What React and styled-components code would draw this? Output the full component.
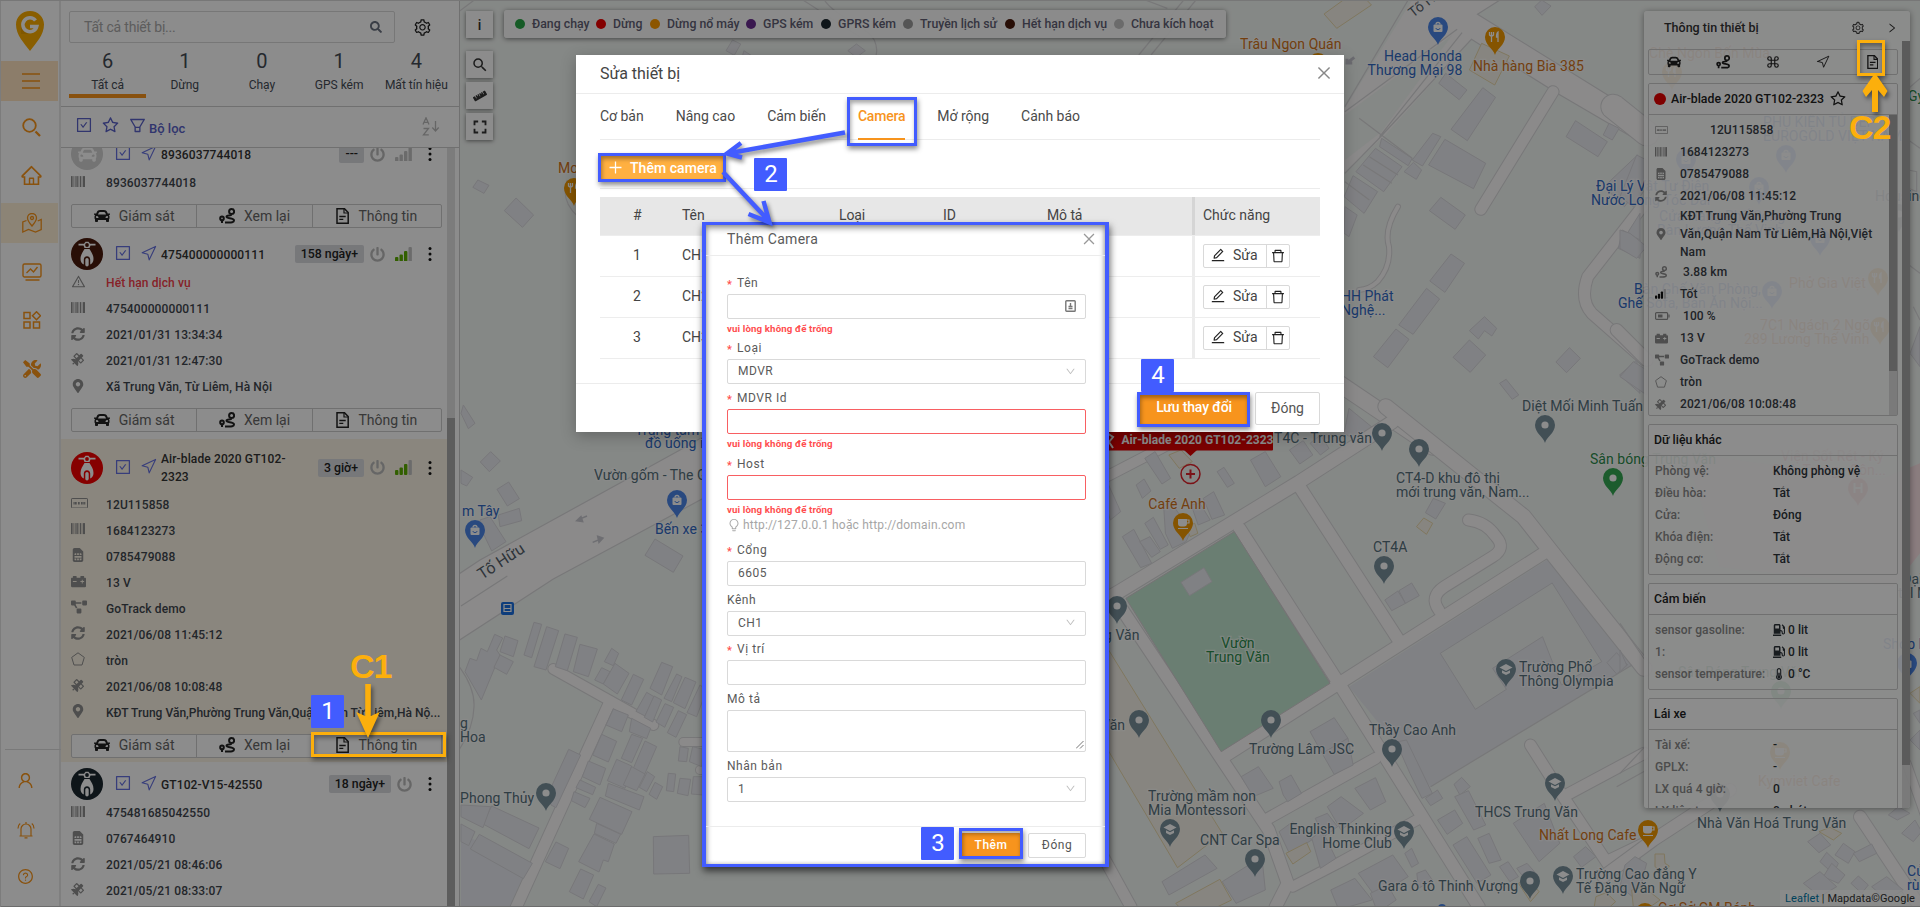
import React from "react";
import styled, { createGlobalStyle, css } from "styled-components";
import {
  AiOutlineHome, AiOutlineUser, AiOutlineQuestionCircle, AiOutlineCheckSquare,
  AiOutlineStar, AiOutlineFilter, AiOutlineSetting, AiOutlineWarning,
  AiOutlineEdit, AiOutlineDelete, AiOutlineClose, AiOutlineDown, AiOutlinePlus,
  AiOutlineRight, AiOutlineBulb,
} from "react-icons/ai";
import {
  FaCar, FaSyncAlt, FaSatellite, FaMapMarkerAlt, FaSimCard, FaCarBattery, FaPowerOff,
  FaGasPump, FaThermometerHalf, FaProjectDiagram, FaSearch, FaTools, FaRuler,
} from "react-icons/fa";
import { FiCommand, FiNavigation } from "react-icons/fi";
import { MdFullscreen, MdSearch } from "react-icons/md";

const ORANGE = "#f7941d";
const BLUE = "#425cff";
const AMBER = "#fcaf0c";

const Global = createGlobalStyle`
  html, body { margin: 0; padding: 0; overflow: hidden; }
  body { font-family: Roboto, "Liberation Sans", sans-serif; font-size: 14px; color: #333; }
  *, *::before, *::after { box-sizing: border-box; }
  svg { display: block; flex: none; }
`;

const Page = styled.div`
  position: relative; display: flex; width: 1920px; height: 907px; overflow: hidden; background: #fff;
`;
const Mask = styled.div`
  position: absolute; inset: 0; background: rgba(0, 0, 0, 0.45);
  box-shadow: inset 0 1px 0 #777, inset 1px 0 0 #7c7c7c, inset 0 -1px 0 #6c6c6c;
`;

/* ---------- icons ---------- */
const Glyph = ({ size = 16, w, children, box = "0 0 24 24", ...p }) => (
  <svg width={w || size} height={size} viewBox={box} fill="none" stroke="currentColor" strokeWidth="2" {...p}>{children}</svg>
);
const MenuIcon = () => <Glyph w={18} size={16} box="0 0 18 16" strokeWidth="1.600"><path d="M0 1h18M0 8h18M0 15h18" /></Glyph>;
const DocIcon = ({ size = 16 }) => (
  <Glyph w={(size * 13) / 16} size={size} box="0 0 13 16" strokeWidth="1.500">
    <path d="M1 .8h7.500l3.700 3.800v10.600H1z" /><path d="M8 1v4h4" strokeWidth="1.200" /><path d="M3.300 8.500h6.400M3.300 11.300h4" strokeWidth="1.300" />
  </Glyph>
);
const RouteIcon = ({ size = 16 }) => (
  <Glyph size={size} box="0 0 16 16" strokeWidth="2">
    <circle cx="12.6" cy="3.6" r="2.5" />
    <circle cx="3" cy="10.4" r="1.8" />
    <path d="M3 12v3" />
    <path d="M12.5 6.5C12 8.4 7.500 6.500 7.500 8.800c0 2.200 7.500.6 7.500 3.700 0 2.500-3.500 2-9 2" />
  </Glyph>
);
const BarcodeIcon = ({ size = 14 }) => (
  <svg width={size} height={size * 0.8} viewBox="0 0 14 11" fill="currentColor">
    {[[0, 1.6], [2.5, .8], [4, .6], [5.4, 1.4], [7.600, .6], [9, 1], [10.700, .6], [12, 2]].map(([x, w]) => <rect key={x} x={x} width={w} height="11" />)}
  </svg>
);
const PlateIcon = ({ size = 17 }) => (
  <svg width={size} height={size * 0.62} viewBox="0 0 17 10.500" fill="none" stroke="currentColor">
    <rect x=".5" y=".5" width="16" height="9.500" rx=".6" />
    <path d="M2.500 5.300h3.500M7 5.300h2M10 5.300h4.500" strokeWidth="2.400" strokeDasharray="1.100 .3" />
  </svg>
);
const PentagonIcon = ({ size = 14 }) => (
  <Glyph size={size} box="0 0 14 14" strokeWidth="1"><path d="M7 .8 13.300 5.400 11 13H3L.7 5.400Z" /></Glyph>
);
const BatteryIcon = () => (
  <Glyph w={15} size={8} box="0 0 15 8" strokeWidth="1.200"><rect x=".6" y=".6" width="12" height="6.800" rx="1" /><path d="M3 4h4.500" strokeWidth="3" /><path d="M14 2.500v3" /></Glyph>
);
const SignalIcon = ({ size = 17, on = "#5cae00", off = "#c4c4c4", lit = 3 }) => (
  <svg width={size} height={size * 0.88} viewBox="0 0 17 15">
    {[[0, 10, 5], [4.500, 7.500, 7.500], [9, 4, 11], [13.500, 0, 15]].map(([x, y, h], i) => (
      <rect key={x} x={x} y={y} width="3.400" height={h} rx="1" fill={i < lit ? on : off} />
    ))}
  </svg>
);
const ScooterIcon = () => (
  <svg width="22" height="28" viewBox="0 0 22 28" fill="#fff">
    <path d="M2.500 3.800h5.500l1.500-2h3l1.500 2h5.500v1.700h-5L13.500 8h-5L7.500 5.500h-5z" />
    <circle cx="11" cy="5" r="1.900" fill="currentColor" />
    <path d="M8.500 9h5c2 3.500 4 6 4 10 0 3-1.400 4.800-3.300 5.600v-5.100c0-4.500-6.400-4.500-6.400 0v5.100C5.900 23.800 4.500 22 4.500 19c0-4 2-6.500 4-10z" />
    <rect x="9.300" y="18" width="3.400" height="8.500" rx="1.700" />
  </svg>
);
const DotsIcon = () => (
  <svg width="4" height="14" viewBox="0 0 4 14" fill="#111"><circle cx="2" cy="1.600" r="1.500" /><circle cx="2" cy="7" r="1.500" /><circle cx="2" cy="12.400" r="1.500" /></svg>
);
const MapMarkIcon = () => (
  <Glyph size={20} box="0 0 20 20" strokeWidth="1.300">
    <path d="M10 13C7 9.500 5.500 7.500 5.500 5a4.500 4.500 0 0 1 9 0c0 2.500-1.500 4.500-4.500 8z" /><circle cx="10" cy="5" r="1.500" />
    <path d="M4.500 7.500.8 9v10l5.700-2.500L13.500 19l5.700-2.500v-10l-3.500 1.500" />
  </Glyph>
);
const ChartIcon = () => (
  <Glyph size={20} box="0 0 20 20" strokeWidth="1.400"><rect x="1" y="2" width="18" height="13" rx="1.500" /><path d="m4.500 11 4-4 3 3 4-5M3.500 18h14" /></Glyph>
);
const AppsIcon = () => (
  <Glyph size={18} box="0 0 18 18" strokeWidth="1.500"><rect x="1" y="1.500" width="6" height="6" /><path d="m13.500.8 4 4-4 4-4-4z" /><rect x="1" y="11" width="6" height="6" /><rect x="10.500" y="11" width="6" height="6" /></Glyph>
);
const BellIcon = () => (
  <Glyph size={18} box="0 0 18 18" strokeWidth="1.200"><path d="M2.500 15h13M4 15V8a5 5 0 0 1 10 0v7M9 1v2M7.500 16.800h3M1 7.500C1 5 1.800 3.500 3.200 2.500M17 7.500c0-2.500-.8-4-2.200-5" /></Glyph>
);
const BigSearch = () => (
  <Glyph size={19} box="0 0 19 19" strokeWidth="1.800"><circle cx="7.500" cy="7.500" r="6.300" /><path d="m13.500 13.500 4.500 4.500" strokeWidth="2.300" /></Glyph>
);
const SortIcon = () => (
  <Glyph w={18} size={19} box="0 0 18 19" strokeWidth="1.300">
    <path d="M1 7.500 4 .8l3 6.700M2 5.300h4M1.500 11.500H6.500L1.500 17.800h5.300M13.500 4v9.500M10.300 10.500l3.200 3.500 3.200-3.500" />
  </Glyph>
);
const LogoMark = () => (
  <svg width="28" height="40" viewBox="0 0 28 40">
    <path d="M14 0C6 0 0 6 0 13.500 0 24 8 32 14 40c6-8 14-16 14-26.500C28 6 22 0 14 0z" fill="#f9ac00" />
    <path d="M5 15v8h9v-2z" fill="#d99000" opacity=".5" />
    <path d="M19.500 9.500a7 7 0 1 0 1.200 6H14" fill="none" stroke="#fff" strokeWidth="3.600" />
  </svg>
);

/* ---------- left rail ---------- */
const Rail = styled.nav`
  width: 61px; flex: none; display: flex; flex-direction: column; align-items: center;
  border-right: 2px solid #e8e8e8; color: #f9951a; background: #fff; padding-top: 11px;
`;
const LogoSlot = styled.div`height: 50px;`;
const RailItem = styled.div`
  width: 57px; height: ${(p) => p.$h || 40}px; margin-bottom: ${(p) => p.$gap ?? 8}px;
  display: flex; align-items: center; justify-content: center; padding-left: ${(p) => p.$nudge ?? 4}px;
  background: ${(p) => p.$bg || "transparent"};
`;
const RailFoot = styled.div`
  margin-top: auto; width: 100%; margin-left: 9px; height: 158px; border-top: 1px solid #dcdcdc; padding-top: 6px;
  ${RailItem} { margin-left: -9px; }
`;

/* ---------- device panel ---------- */
const Panel = styled.section`
  width: 399px; flex: none; display: flex; flex-direction: column; background: #fff;
  border-right: 1px solid #ccc;
`;
const SearchRow = styled.div`display: flex; align-items: center; padding: 11px 0 0 8px; height: 43px;`;
const SearchBox = styled.div`
  width: 326px; height: 32px; border: 1px solid #d9d9d9; border-radius: 2px; display: flex; align-items: center;
  justify-content: space-between; padding: 0 12px 0 14px; color: #a9a9a9; letter-spacing: -0.2px; font-size: 14px;
  svg { color: #6b7280; }
`;
const GearSlot = styled.div`margin-left: 18px; color: #222;`;
const Stats = styled.div`display: flex; margin-left: 8px; height: 63px;`;
const Stat = styled.div`
  width: 77.2px; height: 55px; display: flex; flex-direction: column; align-items: center; color: #444b55;
  border-bottom: 4px solid ${(p) => (p.$on ? ORANGE : "transparent")};
  b { font-weight: 400; font-size: 20px; line-height: 24px; margin-top: 6px; }
  span { font-size: 12px; line-height: 18px; margin-top: 3px; white-space: nowrap; }
`;
const FilterBar = styled.div`
  height: 42px; border: solid #ccc; border-width: 1px 0; display: flex; align-items: center; padding: 0 19px 4px 14px;
  color: #5961c8; font-weight: 500; font-size: 13px; gap: 8px; flex: none;
  > span { margin: 6px 0 0 -6px; }
  > i { margin-left: auto; color: #bbb; padding-top: 2px; }
`;
const ListWrap = styled.div`flex: 1; display: flex; overflow: hidden;`;
const List = styled.div`width: 386px; height: 775px; margin-top: -16px; flex: none;`;
const Track = styled.div`width: 8px; background: #e2e2e2; padding-top: 270px;`;
const Thumb = styled.div`height: 100%; background: #a9a9a9;`;
const Item = styled.article`
  padding: ${(p) => (p.$on ? "10.5px 0 4.5px 10px" : "6px 0 4px 10px")};
  margin-top: ${(p) => (p.$on ? 3 : 0)}px; background: ${(p) => (p.$on ? "#fcf5e6" : "transparent")};
`;
const Head = styled.div`
  display: flex; align-items: center; height: ${(p) => (p.$on ? 36 : 32)}px; margin-bottom: ${(p) => (p.$on ? 6 : 0)}px; padding-right: 15px;
`;
const Avatar = styled.div`
  width: 32px; height: 32px; border-radius: 50%; background: ${(p) => p.$c}; color: ${(p) => p.$c};
  display: flex; align-items: center; justify-content: center; flex: none;
  > svg.car { color: #fff; }
`;
const HeadTools = styled.div`display: flex; align-items: center; gap: 7.500px; margin: -2px 5px 0 11px; color: #6570e0;`;
const Name = styled.div`flex: 1; font-weight: 500; font-size: 12px; line-height: 18px; letter-spacing: .12px; color: #333; padding-top: 1px; max-width: 140px; white-space: ${(p) => (p.$wrap ? "normal" : "nowrap")}; margin-left: -.5px;`;
const Ago = styled.div`
  margin-left: auto; background: #d9dade; border-radius: 2px; font-weight: 500; height: 18px; line-height: 18px; padding: 0 6px;
  font-size: 12.300px; color: #222; white-space: nowrap;
`;
const HeadEnd = styled.div`display: flex; align-items: center; color: #bbb; margin-left: 6px; > :nth-child(2) { margin-left: 10px; } > :last-child { margin-left: 16px; }`;
const Line = styled.div`
  height: 26px; display: flex; align-items: center; font-weight: 500; font-size: 12px; letter-spacing: ${(p) => (p.$tight ? 0.01 : 0.12)}px; color: ${(p) => p.$c || "#3f464e"};
  white-space: nowrap;
  > i { width: 35px; color: #8f8f8f; margin-top: -3px; }
`;
const Actions = styled.div`
  display: flex; width: 371px; height: 24px; margin-top: 8px; border: 1px solid #ccc; border-radius: 2px; background: #fff;
`;
const Action = styled.div`
  width: ${(p) => p.$w}px; display: flex; align-items: center; justify-content: center; gap: 9px; font-size: 14px; color: #666; padding-bottom: 1px;
  & + & { border-left: 1px solid #ccc; }
  svg { color: #222; }
`;

const LINE_ICONS = {
  bar: <BarcodeIcon />, plate: <PlateIcon />, sim: <FaSimCard size={14} />, bat: <FaCarBattery size={15} />,
  org: <FaProjectDiagram size={16} />, sync: <FaSyncAlt size={14} />, geo: <PentagonIcon />, sat: <FaSatellite size={13} />,
  pin: <FaMapMarkerAlt size={14} />, warn: <AiOutlineWarning size={15} />, route: <RouteIcon size={12} />,
  batt: <BatteryIcon />, sig: <SignalIcon size={11} on="#111" lit={3} />,
};
const DEVICES = [
  { name: "8936037744018", c: "#d3d3d3", car: true, ago: "---", lit: 0, rows: [["bar", "8936037744018"]] },
  { name: "475400000000111", c: "#4a1a0c", ago: "158 ngày+", lit: 3, rows: [["warn", "Hết hạn dịch vụ", "#f5404a"], ["bar", "475400000000111"], ["sync", "2021/01/31 13:34:34"], ["sat", "2021/01/31 12:47:30"], ["pin", "Xã Trung Văn, Từ Liêm, Hà Nội"]] },
  { name: "Air-blade 2020 GT102-2323", on: true, c: "#f50000", ago: "3 giờ+", lit: 3, rows: [["plate", "12U115858"], ["bar", "1684123273"], ["sim", "0785479088"], ["bat", "13 V"], ["org", "GoTrack demo"], ["sync", "2021/06/08 11:45:12"], ["geo", "tròn"], ["sat", "2021/06/08 10:08:48"], ["pin", "KĐT Trung Văn,Phường Trung Văn,Quận Nam Từ Liêm,Hà Nộ..."]] },
  { name: "GT102-V15-42550", c: "#1b272e", ago: "18 ngày+", noSignal: true, noActions: true, rows: [["bar", "475481685042550"], ["sim", "0767464910"], ["sync", "2021/05/21 08:46:06"], ["sat", "2021/05/21 08:33:07"]] },
];
const Device = ({ d }) => (
  <Item $on={d.on}>
    <Head $on={d.on}>
      <Avatar $c={d.c}>{d.car ? <FaCar className="car" size={19} /> : <ScooterIcon />}</Avatar>
      <HeadTools><AiOutlineCheckSquare size={18} /><FiNavigation size={17} strokeWidth={1.6} /></HeadTools>
      <Name $wrap={d.on}>{d.name}</Name>
      <Ago>{d.ago}</Ago>
      <HeadEnd><FaPowerOff size={15} />{!d.noSignal && <SignalIcon lit={d.lit} />}<DotsIcon /></HeadEnd>
    </Head>
    {d.rows.map(([k, t, c]) => <Line key={t} $c={c} $tight={t.length > 40}><i>{LINE_ICONS[k]}</i>{t}</Line>)}
    {!d.noActions && (
      <Actions>
        <Action $w={125}><FaCar size={16} />Giám sát</Action>
        <Action $w={116}><RouteIcon size={16} />Xem lại</Action>
        <Action $w={130}><DocIcon size={16} />Thông tin</Action>
      </Actions>
    )}
  </Item>
);

/* ---------- map ---------- */
const MapArea = styled.main`position: relative; flex: 1; overflow: hidden; background: #f3f7f4;`;
const Canvas = styled.svg`
  position: absolute; left: 0; top: 0;
  path, polygon, polyline, rect.b { vector-effect: non-scaling-stroke; }
  .bl { fill: #eaebf0; stroke: #d9d9de; stroke-width: 1; }
  .ye { fill: #f6f3ea; stroke: #e9d9ac; stroke-width: 1; }
  .ln { fill: none; stroke: #dadadc; stroke-width: 1.2; }
  .rd { fill: #fdfbfb; stroke: #dadadc; stroke-width: 1.2; }
  text { font-family: Roboto, sans-serif; font-size: 14px; letter-spacing: .05px; paint-order: stroke; stroke: #fff; stroke-opacity: .55; stroke-width: 2.5px; }
`;
const Roads = ({ list }) => (
  <g fill="none" strokeLinejoin="round" strokeLinecap="round">
    {list.map(([d, w]) => <path key={d} d={d} stroke="#dadadc" strokeWidth={w + 2} />)}
    {list.map(([d, w]) => <path key={d} d={d} stroke="#fdfbfb" strokeWidth={w} />)}
  </g>
);
const Blocks = ({ list, cls = "bl" }) => list.map((p) => <polygon key={p} points={p} className={cls} />);

const PIN_COLORS = { slate: "#78909c", blue: "#4b86e8", orange: "#f29900", green: "#34a853", pink: "#e57373" };
const Pin = ({ x, y, c = "slate", k = "dot" }) => (
  <g transform={`translate(${x} ${y})`}>
    <path d="M0 18C-1.500 12-10 8-10 0a10 10 0 0 1 20 0C10 8 1.500 12 0 18z" fill={PIN_COLORS[c]} />
    {k === "dot" && <circle r="3.600" fill="#fff" />}
    {k === "bag" && <g fill="#fff"><rect x="-4.500" y="-2.500" width="9" height="7.500" rx="1" /><path d="M-2-2.500a2 2 0 0 1 4 0" fill="none" stroke="#fff" strokeWidth="1.300" /><path d="M-2.200 1a2.300 2.300 0 0 0 4.400 0" fill="none" stroke={PIN_COLORS[c]} /></g>}
    {k === "cup" && <g fill="#fff"><path d="M-5-4H4v4.500a3 3 0 0 1-3 3h-3a3 3 0 0 1-3-3z" /><path d="M4-3h2v3H4M-5 5.500H5" fill="none" stroke="#fff" strokeWidth="1.200" /></g>}
    {k === "cap" && <g fill="#fff"><path d="M0-5 6.500-1.500 0 2-6.500-1.500z" /><path d="M-4 1.200 0 3.300 4 1.200V4L0 6-4 4z" /></g>}
    {k === "fork" && <path d="M-3.500-5v4m0 0v6M-5.500-5v3q2 2 4 0v-3M3 5v-10q-1.500 1-1.500 5H3" fill="none" stroke="#fff" strokeWidth="1.300" />}
    {k === "H" && <path d="M-3.500-5V5M3.500-5V5M-3.500 0h7" stroke="#fff" strokeWidth="2" />}
  </g>
);
const PINS = [
  [1438, 27, "blue", "bag"], [1495, 37, "orange", "fork"], [1545, 425], [1382, 433], [1419, 449], [1613, 478, "green"], [1183, 523, "orange", "cup"],
  [1384, 566], [1117, 606], [1506, 669, "slate", "cap"], [1139, 720], [1271, 720], [1392, 749], [1555, 783, "slate", "cap"], [1170, 829, "slate", "cap"],
  [1404, 831, "slate", "cap"], [1255, 859], [1530, 881], [1563, 876, "slate", "cap"], [677, 500, "blue", "bag"], [475, 530, "blue", "bag"], [546, 793],
  [1648, 830, "orange", "cup"], [574, 188, "orange", "fork"], [1672, 72, "orange", "fork"], [1786, 155, "blue", "bag"], [1686, 159, "blue", "bag"],
  [1759, 187, "blue", "bag"], [1820, 238, "blue", "bag"], [1772, 291, "blue", "bag"], [1878, 278, "orange", "fork"], [1880, 327, "orange", "fork"],
  [1899, 214], [1858, 488, "pink", "H"], [1907, 663, "blue", "bag"], [1781, 691, "green"], [1780, 752, "orange", "cup"], [1720, 794], [1645, 913, "orange", "cup"],
  [1318, 63, "orange", "fork"],
];
const T = { s: "#56707c", b: "#3069c4", o: "#d2741a", g: "#2b8c4c", p: "#e57373" };
const LABELS = [
  [1240, 49, "Trâu Ngon Quán", "o"], [1423, 61, "Head Honda", "b", "middle"], [1415, 75, "Thương Mại 98", "b", "middle"], [1473, 71, "Nhà hàng Bia 385", "o"],
  [1596, 191, "Đại Lý Vật Tư Điện", "b"], [1591, 205, "Nước Long Tóc Dài", "b"], [1634, 294, "Bàn Ghế Văn Phòng,", "b"], [1618, 308, "Ghế Sofa, Bàn Ăn Nội...", "b"],
  [1341, 301, "HH Phát", "b"], [1341, 315, "Nghệ...", "b"], [1522, 411, "Diệt Mối Minh Tuấn", "s"], [1274, 443, "T4C - Trung văn", "s"],
  [1396, 483, "CT4-D khu đô thị", "s"], [1396, 497, "mới trung văn, Nam...", "s"], [1590, 464, "Sân bóng Trung Văn", "g"], [1177, 509, "Café Anh", "o", "middle"],
  [1373, 552, "CT4A", "s"], [1104, 640, "g Văn", "s"], [1238, 648, "Vườn", "g", "middle"], [1238, 662, "Trung Văn", "g", "middle"], [1519, 672, "Trường Phổ", "s"],
  [1519, 686, "Thông Olympia", "s"], [1101, 730, "Văn", "s"], [1369, 735, "Thầy Cao Anh", "s"], [1249, 754, "Trường Lâm JSC", "s"], [1148, 801, "Trường mầm non", "s"],
  [1148, 815, "Mia Montessori", "s"], [1200, 845, "CNT Car Spa", "s"], [1392, 834, "English Thinking", "s", "end"], [1392, 848, "Home Club", "s", "end"], [1475, 817, "THCS Trung Văn", "s"],
  [1539, 840, "Nhất Long Cafe", "o"], [1378, 891, "Gara ô tô Thinh Vượng", "s"], [1576, 879, "Trường Cao đẳng Y", "s"], [1576, 893, "Tế Đặng Văn Ngữ", "s"],
  [1697, 828, "Nhà Văn Hoá Trung Văn", "s"], [645, 448, "đồ uống ít", "b"], [635, 435, "Trung tâm phân", "b"], [594, 480, "Vườn gốm - The Garden", "s"],
  [655, 534, "Bến xe 379", "b"], [462, 516, "m Tây", "b"], [460, 728, "g", "s"], [460, 742, "Hoa", "s"], [460, 803, "Phong Thủy", "s"], [558, 173, "Mon", "o"],
  [1649, 58, "Chè Ngon Bốn Mùa", "o"], [1763, 127, "PHỤ KIỆN TỦ BẾP", "b"], [1763, 141, "EUROGOLD VIỆT NAM", "b"], [1659, 221, "Cửa Hàng Phố Sóng", "b"], [1657, 235, "Bàn Lương Thế Vinh", "b"],
  [1789, 288, "Phở Gia Việt", "o"], [1760, 330, "7C1 Ngách 2 Ngõ", "o"], [1744, 344, "289 Lương Thế Vinh", "o"], [1875, 201, "Housing", "s"], [1908, 101, "Gym", "g"],
  [1781, 461, "Viện Sốt Rét - Ký", "p"], [1772, 475, "Sinh Trùng - Côn...", "p"], [1902, 584, "Đại", "s"], [1898, 598, "tel M", "s"], [1883, 649, "Shop M", "b"], [1678, 677, "Sân Bóng Trung Văn", "g"],
  [1758, 786, "Kymviet Cafe", "o"], [1907, 876, "Cửa", "b"], [1907, 890, "rùa", "b"], [1658, 913, "Cơ Sở GM Bánh", "o"],
];
const Z5 = "translate(1000 0) scale(.40816 .33333)";
const Z10 = "translate(1100 420) scale(.34439 .33333)";
const Z11 = "translate(450 400) scale(.33333)";

const MapCanvas = () => (
  <Canvas width="1460" height="907" viewBox="460 0 1460 907">
    <g transform="translate(460 0) scale(.35714 .33333)">
      <path d="M-10 40 40 0M960 0c60 40 110 80 160 110M1020 0c30 50 110 70 140 120 12 30 6 40-2 80M300 540q-20 60 30 110" className="ln" />
      <Blocks list={["763,120 786,132 768,166 745,152", "1110,132 1135,152 1110,172 1086,152", "795,152 815,166 790,172", "50,540 81,556 67,580 36,562", "157,594 206,645 175,682 124,632"]} />
    </g>
    <g transform={Z5}>
      <path d="M340 165 450 0M370 165 480 0M356 0 410 25" className="ln" />
      <polygon points="1010,0 1225,0 1170,43 1568,345 1568,425 1365,280 1155,118 940,410 840,520 840,335" className="rd" strokeOpacity="0" />
      <path d="M1225 0 1170 43 1568 345M1568 425 1365 280 1155 118 925 420 845 520M1000 0 845 320M1120 88 845 335M1132 98 930 410" className="ln" />
      <polygon points="845,345 1108,105 935,395 845,480" fill="#f3f7f4" />
      <Roads list={[["M1355 275 1178 628", 11], ["M1580 610 1440 830 Q1420 900 1450 940L1580 1080", 11], ["M975 620Q940 690 953 740 958 800 925 845 905 868 880 870", 4], ["M830 1150 1060 1340", 16]]} />
      <Blocks list={["1092,220 1144,270 1125,299 1075,250", "1183,263 1214,292 1145,422 1105,388", "1060,400 1080,410 1035,498 1010,480", "1090,418 1190,490 1160,566 1050,495", "1410,362 1488,425 1465,470 1387,410", "1492,370 1517,385 1500,420 1478,405", "935,415 1010,475 1000,497 930,440", "920,445 985,500 940,575 872,515", "865,527 925,575 892,640 843,590", "845,620 875,645 855,710 843,700", "1013,487 1033,510 1020,538 990,515", "1080,592 1140,645 1115,688 1052,632", "1105,762 1138,790 1090,877 1053,843", "1045,865 1077,897 1012,1003 977,975", "970,987 1002,1018 950,1103 915,1070", "1187,950 1217,985 1205,1008 1187,992 1172,1017 1150,992", "1150,1020 1190,1065 1152,1117 1110,1072", "1395,1043 1422,1075 1388,1118 1362,1086", "1240,1138 1271,1185 1255,1198 1224,1150", "1562,465 1568,560 1530,620 1480,560", "1568,640 1568,770 1516,740", "1560,1080 1568,1180 1518,1125", "1327,0 1350,18 1328,46 1310,20", "1525,690 1568,720 1568,775 1515,745", "855,1225 920,1290 900,1340 843,1300"]} />
      <path d="M890 495 960 550M905 470 975 525M880 355 1010 475M845 545 905 600" className="ln" />
      <Blocks cls="ye" list={["875,-30 910,15 825,85 794,42", "1180,130 1248,168 1212,255 1150,210"]} />
      <path d="m868 172-18 17m0-13v13h13" className="ln" strokeWidth="2" style={{ stroke: "#c4c4cc", strokeWidth: 3 }} />
    </g>
    <g transform={Z11}>
      <polygon points="10,533 90,480 690,150 900,30 900,220 760,295 310,537 10,732" className="rd" />
      <path d="M33 618 172 528M20 790Q75 860 72 920 70 990 20 1060" className="ln" />
      <polygon points="33,1300 240,1400 190,1530 33,1530" fill="#e9ecf2" />
      <Roads list={[["M310 807 610 975", 10], ["M480 905 395 1090 195 1530", 11], ["M700 1026H790M750 1110H790", 8]]} />
      <Blocks list={["40,15 75,70 55,86 33,40", "122,155 151,183 118,215 91,186", "33,210 68,232 50,258 33,250", "176,246 208,296 172,318 141,268", "145,345 208,325 215,362 150,380", "90,360 120,350 168,425 125,453 95,390", "615,417 699,468 670,517 585,466", "252,667 275,673 245,773 222,765", "290,680 326,692 288,810 252,800", "345,702 382,712 352,812 316,800", "390,733 442,747 415,830 370,815", "134,703 158,714 140,750 150,765 94,900 45,815 60,775 80,782 93,745 112,755", "165,708 204,722 190,770 150,755", "150,765 190,785 170,823 132,802", "485,745 506,760 490,797 463,785", "455,803 480,815 460,852 434,840", "495,790 537,820 502,882 460,852", "550,823 581,838 545,915 514,900", "635,787 668,800 635,885 600,865", "680,822 696,830 665,905 642,895", "705,832 738,846 705,926 670,908", "750,855 770,870 740,950 711,938", "590,877 612,890 585,948 558,934", "612,888 635,900 608,966 583,952", "645,911 671,922 644,982 618,966", "685,932 710,944 678,1012 652,998", "490,927 535,945 515,995 468,975", "545,955 602,985 590,1016 538,995", "455,1003 500,1024 475,1086 428,1065", "545,1003 578,1015 545,1088 514,1075", "585,1023 620,1040 583,1125 550,1105", "500,1078 545,1098 525,1165 472,1142", "545,1100 585,1122 560,1172 520,1155", "592,1115 614,1130 590,1175 568,1162", "475,1150 582,1190 568,1230 466,1188", "615,1147 638,1160 620,1198 597,1183", "655,1120 677,1122 671,1175 649,1172", "690,1135 722,1138 714,1187 682,1180", "730,1130 760,1130 760,1185 724,1182", "690,1040 715,1045 710,1085 685,1083", "728,1040 760,1048 755,1100 718,1085", "415,1083 467,1105 450,1155 397,1130", "390,1140 437,1162 428,1184 378,1163", "372,1175 420,1195 405,1223 364,1202", "450,1192 546,1235 515,1303 418,1258", "440,1270 512,1303 498,1330 433,1300", "432,1302 493,1332 475,1385 460,1380 447,1416 386,1385", "392,1407 431,1425 400,1497 358,1475", "445,1453 468,1464 440,1520 417,1505", "610,1310 716,1306 719,1420 611,1422", "318,1326 356,1345 330,1406 286,1385", "356,1048 392,1065 318,1223 303,1215 295,1180", "125,1218 267,1284 237,1346 99,1272", "33,1215 122,1220 99,1283 33,1250", "88,1303 247,1390 220,1436 61,1347", "33,1272 75,1295 56,1337 33,1325"]} />
      <g stroke="#c9c9d0" strokeWidth="1.500" fill="#c9c9d0"><path d="m411 348-24 10m6-8-13 12 18 3z" /><path d="m428 427 24-10m-9-8 16 5-12 13z" /></g>
    </g>
    <g transform={Z10}>
      <polygon points="25,690 355,1240 225,1343 -200,600 -100,500" className="ye" />
      <polygon points="723,800 1312,410 1545,735 960,1100" fill="#e9ebf1" />
      <Roads list={[["M-250 700 60 512 578 186 850 5", 13], ["M573 190 865 657", 12], ["M405 325 700 800 1100 1461", 12], ["M65 570 355 1020 490 1230 545 1390 510 1461", 12], ["M360 1010 1300 392", 12], ["M830-40 1230 290 1310 395 1580 745", 15], ["M475 1203 800 1015", 11], ["M560 1400 700 1325 920 1200", 10], ["M985 572Q955 530 1000 500L1140 410Q1180 385 1150 350 1120 305 1070 300", 11], ["M1250 975 1345 1130 1480 1340M1345 1130 1580 1000M1480 1320 1580 1270", 11], ["M-60 1180 90 1461", 11], ["M0 180 560 -120", 10]]} />
      <polygon points="75,535 390,335 668,790 352,995" fill="#c2e6cf" stroke="#d5cfd3" />
      <polygon points="988,700 1313,489 1457,725 1340,795 1285,650 1140,745 1180,808 1090,868" fill="#f1f5f2" stroke="#d9d9de" />
      <path d="M960 1100 1545 735" className="ln" strokeWidth=".6" />
      <Blocks list={["235,487 302,443 325,485 260,527", "130,115 160,95 205,175 180,192", "105,195 128,177 148,213 123,235", "340,155 360,142 390,190 370,202", "437,120 480,95 525,170 480,200", "65,350 98,328 150,430 118,443", "115,365 145,350 175,395 150,412", "130,310 155,292 198,375 175,388", "185,260 205,245 235,290 265,330 250,365 210,385 190,340", "265,255 290,250 320,300 285,315", "300,235 330,215 362,285 325,298", "0,200 25,195 60,275 30,300", "550,90 590,62 618,105 580,132", "610,70 640,45 665,85 640,105", "968,235 1003,250 975,297 945,278", "827,540 865,513 887,550 847,572", "868,512 905,489 927,527 887,550", "1500,698 1532,735 1500,762 1472,728", "610,935 680,893 720,955 645,1000", "645,1000 720,955 735,1035 680,1063", "410,1070 460,1040 503,1105 445,1130", "520,1085 555,1065 585,1120 545,1145 532,1125", "180,1385 305,1305 340,1345 200,1425", "355,1385 470,1310 480,1410 395,1450", "520,1235 560,1205 615,1260 550,1300", "615,1255 645,1230 685,1315 640,1345", "625,1195 660,1180 690,1220 650,1250", "660,1160 700,1130 765,1180 700,1230", "740,1105 800,1073 830,1145 785,1170", "865,965 890,960 965,1120 935,1135 900,1060 870,990", "945,1135 980,1110 995,1135 960,1157", "1028,1093 1050,1072 1075,1100 1045,1125", "1030,1130 1070,1112 1120,1215 1085,1230", "980,1200 1030,1170 1053,1210 1008,1243", "1025,1275 1065,1250 1135,1365 1095,1390", "1097,1255 1130,1240 1165,1320 1130,1330", "1200,1210 1290,1150 1335,1270 1275,1325", "1375,1310 1410,1280 1440,1310 1398,1342", "1160,1340 1185,1325 1215,1370 1190,1385", "885,1300 905,1285 925,1330 905,1342", "750,1360 850,1305 895,1370 800,1430", "670,1410 740,1375 790,1440 720,1461 690,1461", "920,1360 945,1350 965,1380 925,1405", "785,1420 835,1395 860,1440 830,1461 800,1461", "1210,1345 1240,1330 1270,1365 1250,1400", "1520,1340 1568,1310 1568,1360 1540,1380"]} />
      <Blocks cls="ye" list={["200,105 235,90 268,125 230,145", "940,294 966,310 948,343 919,320", "540,1300 600,1268 612,1295 560,1332", "220,1450 348,1378 382,1440 340,1461 230,1461", "1215,1390 1240,1375 1275,1415 1250,1445", "1440,1430 1470,1418 1497,1445 1480,1461 1435,1461", "250,320 275,310 284,340 262,350"]} />
    </g>
    <g transform="translate(1620 420) scale(.33333)">
      <path d="M0 610 75 720M0 1060 75 980M-10 1100 80 1050" className="ln" />
      <polygon points="200,100 780,180 900,130 900,400 820,500 300,440" fill="#fbe3e6" />
      <Roads list={[["M-50 1370 100 1260 330 1110", 12], ["M720 1190 900 1461", 12], ["M860 1030 920 1200", 8]]} />
      <Blocks list={["0,690 20,735 0,755", "880,880 900,870 900,910", "870,960 900,930 900,990", "805,1185 835,1160 870,1180 832,1200", "845,1240 885,1200 905,1235 880,1265", "600,1240 632,1275 597,1298 563,1265", "620,1297 655,1330 640,1362 600,1325", "670,1270 705,1295 685,1330 645,1305", "700,1300 755,1272 770,1300 718,1325", "635,1330 675,1365 655,1390 610,1370", "715,1368 745,1395 725,1420 693,1390", "550,1390 600,1355 650,1400 600,1430", "755,1400 800,1370 850,1410 800,1440", "15,1335 45,1310 80,1330 50,1440 0,1400"]} />
      <Blocks cls="ye" list={["105,1302 133,1302 135,1330 148,1338 130,1360 105,1340", "597,1235 630,1222 665,1240 640,1260", "35,1410 70,1400 120,1440 90,1461 40,1461", "870,820 900,800 900,850"]} />
    </g>
    <g transform="translate(1620 0) scale(.33333)">
      <path d="M860 270 900 235M865 420l35 25M865 510l25 5v60l-25-10M860 790l40 30M880 920 900 960" className="ln" />
      <Roads list={[["M-20 320 80 400", 24], ["M-10 990 80 1080", 12]]} />
      <Blocks list={["50,465 80,480 80,560 40,620 0,590", "0,690 30,700 80,740 50,775 0,745", "40,1085 80,1110 80,1185 0,1130", "870,1060 900,980 900,1100"]} />
    </g>
    {PINS.map(([x, y, c, k]) => <Pin key={`${x}-${y}`} x={x} y={y} c={c} k={k} />)}
    {LABELS.map(([x, y, t, c, a]) => <text key={`${x}-${y}`} x={x} y={y} fill={T[c]} textAnchor={a || "start"}>{t}</text>)}
    <text transform="translate(482 580) rotate(-33)" fill="#55606a" style={{ fontSize: 16 }}>Tố Hữu</text>
    <text transform="translate(1413 18) rotate(-38)" fill="#55606a">Tố Hữu</text>
    <rect x="501" y="602" width="13" height="13" rx="2" fill="#1a6fe0" />
    <path d="M504 604.500h7v7h-7zM504 608.500h7" fill="none" stroke="#fff" strokeWidth="1.200" />
    <rect x="1040" y="430" width="233" height="20.500" rx="1" fill="#e00000" />
    <path d="m1184 450 6.500 6 6.500-6z" fill="#e00000" />
    <path d="m1107 433 6 4-4 5 4 6" fill="none" stroke="#fff" strokeWidth="2" />
    <text x="1121.500" y="444" fill="#fff" style={{ fontWeight: 700, fontSize: 12, letterSpacing: 0, stroke: "none" }}>Air-blade 2020 GT102-2323</text>
    <circle cx="1190.500" cy="474" r="9.500" fill="none" stroke="#e0242c" strokeWidth="1.500" />
    <path d="M1186 474h9M1190.500 469.500v9" stroke="#e0242c" strokeWidth="2" />
    <circle cx="1442" cy="908" r="4" fill="#4b86e8" />
  </Canvas>
);
const MapButtons = styled.div`position: absolute; left: 6px; top: 11px; display: flex; flex-direction: column; gap: 4px;`;
const MapButton = styled.div`
  width: 27px; height: 27px; background: #fff; box-shadow: 0 1px 4px rgba(0,0,0,.5); display: flex; align-items: center; justify-content: center;
  color: #333; font-size: 14px; font-weight: 500; margin-bottom: ${(p) => p.$gap || 0}px;
`;
const Legend = styled.div`
  position: absolute; left: 44px; top: 10px; width: 722px; height: 28px; background: rgba(255,255,255,.88); border-radius: 3px;
  box-shadow: 0 1px 5px rgba(0,0,0,.5); display: flex; align-items: center; padding-left: 11px; gap: 7px; font-weight: 500; font-size: 12.300px; color: #615f74;
`;
const LegendEntry = styled.span`
  display: flex; align-items: center; gap: 7px; white-space: nowrap; width: ${(p) => p.$w}px;
  &::before { content: ""; width: 10px; height: 10px; border-radius: 50%; background: ${(p) => p.$c}; flex: none; }
`;
const LEGEND = [["#28a745", "Đang chạy", 74], ["#f00000", "Dừng", 47], ["#ff9d00", "Dừng nổ máy", 89], ["#6a2c91", "GPS kém", 68], ["#1b272e", "GPRS kém", 75], ["#9b9b9b", "Truyền lịch sử", 95], ["#4a1a0c", "Hết hạn dịch vụ", 102], ["#c4c4c4", "Chưa kích hoạt", 100]];
const Credit = styled.div`
  position: absolute; right: 0; bottom: 0; height: 17px; padding: 0 5px; background: rgba(255,255,255,.7); font: 11px/17px Roboto, sans-serif; color: #333; letter-spacing: .05px;
  a { color: #0078a8; }
`;

/* ---------- device info card ---------- */
const Info = styled.aside`
  position: absolute; left: 1184px; top: 11px; width: 266px; height: 797px; background: rgba(255,255,255,.9); border-radius: 3px;
  box-shadow: 0 1px 6px rgba(0,0,0,.4); display: flex; flex-direction: column; overflow: hidden;
`;
const InfoTitle = styled.div`
  height: 30px; flex: none; display: flex; align-items: center; padding: 3px 12px 0 20px; font-weight: 500; font-size: 12.500px; color: #333;
  span { flex: 1; }
  svg + svg { margin-left: 21px; }
`;
const InfoScroll = styled.div`flex: 1; min-height: 0; display: flex;`;
const InfoBody = styled.div`width: 254px; margin-right: 4px; padding: 8px 0 0 4px; display: flex; flex-direction: column; gap: 8px; flex: none;`;
const InfoTrack = styled.div`width: 8px; background: rgba(190,190,190,.5);`;
const InfoThumb = styled.div`height: ${(p) => p.$h}px; background: #a6a6a6;`;
const IconBar = styled.div`
  height: 26px; border: 1px solid #ccc; border-radius: 2px; display: grid; grid-template-columns: repeat(5, 1fr); place-items: center; color: #222; flex: none;
`;
const Box = styled.div`border: 1px solid #ccc; border-radius: 2px; flex: none; height: ${(p) => p.$h}px; overflow: hidden;`;
const BoxHead = styled.div`
  height: 31px; border-bottom: 1px solid #ccc; display: flex; align-items: center; padding-left: 5px; font-weight: 500; font-size: 12.300px; color: #222; background: rgba(255,255,255,.5);
  svg { margin-left: 5px; }
`;
const RedDot = styled.i`width: 12px; height: 12px; border-radius: 50%; background: #e80000; margin-right: 5px;`;
const BoxScroll = styled.div`display: flex; height: 301px; justify-content: space-between;`;
const BoxRows = styled.div`padding: 4px 0 0 6px;`;
const InfoLine = styled.div`
  display: flex; align-items: center; min-height: 22px; line-height: ${(p) => (p.$tall ? 18 : 22)}px; font-weight: 500; font-size: 12px; letter-spacing: .1px; color: #3a4148;
  > i { width: ${(p) => (p.$wide ? 55 : 25)}px; color: #8f8f8f; flex: none; }
  > span { width: 195px; padding-left: ${(p) => p.$pad || 0}px; }
`;
const Pair = styled.div`
  height: 22px; display: flex; align-items: center; font-weight: 500; font-size: 12px; letter-spacing: .1px; color: #8a8a8a; white-space: nowrap;
  span { width: 118px; }
  b { font-weight: 500; color: #2d343a; display: flex; align-items: center; gap: 3px; font-size: 12px; letter-spacing: .05px; }
`;
const gas = <FaGasPump size={12} />;
const GROUPS = [
  { t: "Dữ liệu khác", h: 151, rows: [["Phòng vệ:", "Không phòng vệ"], ["Điều hòa:", "Tắt"], ["Cửa:", "Đóng"], ["Khóa điện:", "Tắt"], ["Động cơ:", "Tắt"]] },
  { t: "Cảm biến", h: 107, rows: [["sensor gasoline:", <>{gas}0 lit</>], ["1:", <>{gas}0 lit</>], ["sensor temperature:", <><FaThermometerHalf size={12} />0 °C</>]] },
  { t: "Lái xe", h: 150, rows: [["Tài xế:", "-"], ["GPLX:", "-"], ["LX quá 4 giờ:", "0"], ["LX liên tục:", "0 phút"]] },
];
const InfoCard = () => (
  <Info>
    <InfoTitle><span>Thông tin thiết bị</span><AiOutlineSetting size={14} /><AiOutlineRight size={12} /></InfoTitle>
    <InfoScroll>
      <InfoBody>
        <IconBar><FaCar size={14} /><RouteIcon size={14} /><FiCommand size={14} /><FiNavigation size={14} strokeWidth={1.6} /><DocIcon size={14} /></IconBar>
        <Box $h={333}>
          <BoxHead><RedDot />Air-blade 2020 GT102-2323<AiOutlineStar size={18} /></BoxHead>
          <BoxScroll>
            <BoxRows>
              <InfoLine $wide><i><PlateIcon size={13} /></i>12U115858</InfoLine>
              <InfoLine><i><BarcodeIcon size={12} /></i>1684123273</InfoLine>
              <InfoLine><i><FaSimCard size={12} /></i>0785479088</InfoLine>
              <InfoLine><i><FaSyncAlt size={12} /></i>2021/06/08 11:45:12</InfoLine>
              <InfoLine $tall><i><FaMapMarkerAlt size={12} /></i><span>KĐT Trung Văn,Phường Trung Văn,Quận Nam Từ Liêm,Hà Nội,Việt Nam</span></InfoLine>
              <InfoLine $pad={3}><i><RouteIcon size={12} /></i><span>3.88 km</span></InfoLine>
              <InfoLine><i>{LINE_ICONS.sig}</i>Tốt</InfoLine>
              <InfoLine $pad={3}><i><BatteryIcon /></i><span>100 %</span></InfoLine>
              <InfoLine><i><FaCarBattery size={13} /></i>13 V</InfoLine>
              <InfoLine><i><FaProjectDiagram size={14} /></i>GoTrack demo</InfoLine>
              <InfoLine><i><PentagonIcon size={12} /></i>tròn</InfoLine>
              <InfoLine><i><FaSatellite size={11} /></i>2021/06/08 10:08:48</InfoLine>
            </BoxRows>
            <InfoTrack><InfoThumb $h={256} /></InfoTrack>
          </BoxScroll>
        </Box>
        {GROUPS.map((g) => (
          <Box key={g.t} $h={g.h}>
            <BoxHead>{g.t}</BoxHead>
            <BoxRows>{g.rows.map(([a, b]) => <Pair key={a}><span>{a}</span><b>{b}</b></Pair>)}</BoxRows>
          </Box>
        ))}
      </InfoBody>
      <InfoTrack><InfoThumb $h={724} /></InfoTrack>
    </InfoScroll>
  </Info>
);

/* ---------- edit device dialog ---------- */
const EditDialog = styled.div`
  position: absolute; left: 576px; top: 55px; width: 768px; height: 377px; background: #fff; color: #4a4a4a;
  box-shadow: 0 4px 14px rgba(0,0,0,.25); display: flex; flex-direction: column;
`;
const DialogHead = styled.div`
  height: 39px; border-bottom: 1px solid #ececec; display: flex; align-items: center; justify-content: space-between;
  padding: 0 11px 2px 24px; font-size: 16px; color: #444; letter-spacing: -.05px;
  svg { color: #888; }
`;
const Tabs = styled.div`height: 46px; margin: 0 24px; border-bottom: 1px solid #ececec; display: flex; gap: 32px;`;
const Tab = styled.div`
  line-height: 22px; padding: 11px 0 0; height: 46px; white-space: nowrap; letter-spacing: -.02px;
  ${(p) => p.$on && css`color: ${ORANGE}; border-bottom: 2px solid ${ORANGE}; font-weight: 500; letter-spacing: -.2px;`}
`;
const AddRow = styled.div`height: 49px; margin: 0 24px; border-bottom: 1px solid #ececec; padding-top: 14px;`;
const AddButton = styled.div`
  width: 126px; height: 27px; background: #ffb041; color: #fff; font-weight: 500; font-size: 14px; display: flex; align-items: center; gap: 6px; padding-left: 7px; white-space: nowrap; letter-spacing: .05px;
`;
const Table = styled.div`margin: 8px 24px 0; width: 720px;`;
const TRow = styled.div`
  display: grid; grid-template-columns: 66px 157px 104px 104px 145px 144px; height: ${(p) => (p.$head ? 39 : 41)}px; align-items: center;
  background: ${(p) => (p.$head ? "#e7e7e7" : "#fff")}; border-bottom: 1px solid #ededed; font-size: 14px; color: #444;
  > span { padding: 0 0 2px 16px; letter-spacing: -.1px; }
  > span:first-child { padding-left: 33px; }
`;
const StickyCell = styled.div`
  align-self: stretch; display: flex; align-items: center; padding: 0 0 ${(p) => (p.$head ? 2 : 1)}px 8px; margin-left: 16px;
  border-left: 3px solid ${(p) => (p.$head ? "#d5d5d5" : "#ececec")}; white-space: nowrap;
`;
const EditGroup = styled.div`
  display: flex; width: 87px; height: 24px; border: 1px solid #d9d9d9; border-radius: 2px; align-items: center; color: #444;
  > span { display: flex; width: 63px; gap: 7px; padding: 0 0 1px 6px; align-items: center; border-right: 1px solid #d9d9d9; height: 22px; }
  > svg { margin-left: 3px; color: #222; }
  > span > svg { color: #222; }
`;
const DialogFoot = styled.div`
  margin-top: auto; height: ${(p) => p.$h}px; border-top: 1px solid #ececec; display: flex; justify-content: flex-end; gap: ${(p) => p.$gap}px; padding: ${(p) => p.$pad};
`;
const Button = styled.div`
  width: ${(p) => p.$w}px; height: ${(p) => p.$h}px; font-size: ${(p) => p.$fs || 14}px; display: flex; align-items: center; justify-content: center; border-radius: 2px;
  border: 1px solid ${(p) => (p.$primary ? ORANGE : "#d9d9d9")}; background: ${(p) => (p.$primary ? ORANGE : "#fff")}; color: ${(p) => (p.$primary ? "#fff" : "#555")};
  font-weight: ${(p) => (p.$primary ? 500 : 400)}; letter-spacing: ${(p) => p.$ls || 0}px; padding-bottom: ${(p) => p.$pb || 0}px;
`;

/* ---------- add camera dialog ---------- */
const AddDialog = styled.div`
  position: absolute; left: 702px; top: 222px; width: 407px; height: 645px; background: #fff; border: solid ${BLUE}; border-width: 3px 4px;
  box-shadow: 1px 4px 7px rgba(0,0,0,.6), inset 0 3px 6px rgba(0,0,0,.4), inset 0 0 4px rgba(0,0,0,.2); display: flex; flex-direction: column; color: #5a5a5a;
`;
const AddHead = styled.div`
  height: 31px; border-bottom: 1px solid #ececec; display: flex; align-items: center; justify-content: space-between; padding: 0 8px 2px 21px; font-size: 14px; letter-spacing: .3px;
  svg { color: #999; }
`;
const Form = styled.div`padding: 16.600px 19px 0 21px; display: flex; flex-direction: column; gap: 3.7px;`;
const Label = styled.div`
  height: 21px; line-height: 21px; font-size: 12px; letter-spacing: .55px; display: flex;
  ${(p) => p.$req && css`&::before { content: "*"; color: #ff4d4f; width: 10px; font-weight: 500; padding-top: 1px; font-size: 11px; }`}
`;
const Field = styled.div`
  height: ${(p) => p.$h || 25}px; border: 1px solid ${(p) => (p.$bad ? "#f85f62" : "#d9d9d9")}; border-radius: 2px; display: flex; align-items: center;
  justify-content: space-between; padding: 0 9px 1px 10px; font-size: 12px; letter-spacing: .5px;
  > svg { margin-left: auto; color: #bfbfbf; }
`;
const Fault = styled.div`height: 16px; font-size: 9.700px; line-height: 19px; font-weight: 700; color: #ff4d4f; letter-spacing: .12px;`;
const Hint = styled.div`height: 20.500px; display: flex; align-items: center; gap: 2px; color: #a6a6a6; font-size: 12px; letter-spacing: .2px; padding-bottom: 2px;`;
const Handle = styled.svg`align-self: flex-end; margin: 0 -8px 1px 0;`;
const CardIcon = () => (
  <svg width="11" height="12" viewBox="0 0 11 12" fill="none" stroke="#777" strokeWidth="1.400"><rect x=".8" y=".8" width="9.400" height="10.400" rx=".8" /><path d="M5.500 3v3M3.500 6.500h4M3.500 8.500h4" /></svg>
);
const FIELDS = [
  { l: "Tên", req: 1, icon: <CardIcon />, err: 1 }, { l: "Loại", req: 1, v: "MDVR", sel: 1 }, { l: "MDVR Id", req: 1, bad: 1, err: 1 },
  { l: "Host", req: 1, bad: 1, err: 1, hint: "http://127.0.0.1 hoặc http://domain.com" }, { l: "Cổng", req: 1, v: "6605" }, { l: "Kênh", v: "CH1", sel: 1 },
  { l: "Vị trí", req: 1 }, { l: "Mô tả", h: 42, area: 1 }, { l: "Nhân bản", v: "1", sel: 1 },
];

/* ---------- walkthrough marks ---------- */
const Frame = styled.div`
  position: absolute; left: ${(p) => p.$x}px; top: ${(p) => p.$y}px; width: ${(p) => p.$w}px; height: ${(p) => p.$h}px;
  border: 3px solid ${(p) => p.$c || BLUE}; box-shadow: 1px 3px 5px rgba(0,0,0,.45), inset 1px 3px 4px rgba(0,0,0,.35);
`;
const Step = styled.div`
  position: absolute; left: ${(p) => p.$x}px; top: ${(p) => p.$y}px; width: 33px; height: 33px; background: ${BLUE}; color: #fff; border-radius: 1px;
  font-size: 24px; line-height: 33px; text-align: center; padding-left: 1px;
`;
const Tag = styled.div`
  position: absolute; left: ${(p) => p.$x}px; top: ${(p) => p.$y}px; color: ${AMBER}; font: 700 34px/34px "Liberation Sans", sans-serif; letter-spacing: -1px;
`;
const Arrows = styled.svg`position: absolute; left: 0; top: 0; filter: drop-shadow(2px 3px 2px rgba(0,0,0,.45));`;

export default function App() {
  return (
    <>
      <Global />
      <Page>
        <Rail>
          <LogoSlot><LogoMark /></LogoSlot>
          <RailItem $bg="#ffe3c2" $nudge={2} $gap={6}><MenuIcon /></RailItem>
          <RailItem><BigSearch /></RailItem>
          <RailItem><AiOutlineHome size={23} /></RailItem>
          <RailItem $bg="#fff0d8" $gap={9}><MapMarkIcon /></RailItem>
          <RailItem><ChartIcon /></RailItem>
          <RailItem $gap={9}><AppsIcon /></RailItem>
          <RailItem><FaTools size={18} /></RailItem>
          <RailFoot>
            <RailItem $h={48} $gap={2} $nudge={2}><AiOutlineUser size={19} /></RailItem>
            <RailItem $h={48} $gap={0}><BellIcon /></RailItem>
            <RailItem $h={44} $nudge={2}><AiOutlineQuestionCircle size={17} /></RailItem>
          </RailFoot>
        </Rail>
        <Panel>
          <SearchRow>
            <SearchBox>Tất cả thiết bị...<FaSearch size={12} /></SearchBox>
            <GearSlot><AiOutlineSetting size={19} /></GearSlot>
          </SearchRow>
          <Stats>
            {[["6", "Tất cả"], ["1", "Dừng"], ["0", "Chạy"], ["1", "GPS kém"], ["4", "Mất tín hiệu"]].map(([n, t], i) => (
              <Stat key={t} $on={i === 0}><b>{n}</b><span>{t}</span></Stat>
            ))}
          </Stats>
          <FilterBar>
            <AiOutlineCheckSquare size={18} /><AiOutlineStar size={19} /><AiOutlineFilter size={19} /><span>Bộ lọc</span><i><SortIcon /></i>
          </FilterBar>
          <ListWrap>
            <List>{DEVICES.map((d) => <Device key={d.name} d={d} />)}</List>
            <Track><Thumb /></Track>
          </ListWrap>
        </Panel>
        <MapArea>
          <MapCanvas />
          <MapButtons>
            <MapButton $gap={9}>i</MapButton>
            <MapButton><MdSearch size={18} /></MapButton>
            <MapButton><FaRuler size={14} /></MapButton>
            <MapButton><MdFullscreen size={22} /></MapButton>
          </MapButtons>
          <Legend>{LEGEND.map(([c, t, w]) => <LegendEntry key={t} $c={c} $w={w}>{t}</LegendEntry>)}</Legend>
          <InfoCard />
          <Credit><a>Leaflet</a> | Mapdata©Google</Credit>
        </MapArea>
        <Mask />

        <EditDialog>
          <DialogHead>Sửa thiết bị<AiOutlineClose size={18} /></DialogHead>
          <Tabs>{["Cơ bản", "Nâng cao", "Cảm biến", "Camera", "Mở rộng", "Cảnh báo"].map((t) => <Tab key={t} $on={t === "Camera"}>{t}</Tab>)}</Tabs>
          <AddRow><AddButton><AiOutlinePlus size={17} />Thêm camera</AddButton></AddRow>
          <Table>
            <TRow $head><span>#</span><span>Tên</span><span>Loại</span><span>ID</span><span>Mô tả</span><StickyCell $head>Chức năng</StickyCell></TRow>
            {[1, 2, 3].map((n) => (
              <TRow key={n}><span>{n}</span><span>CH{n}</span><span /><span /><span />
                <StickyCell><EditGroup><span><AiOutlineEdit size={16} />Sửa</span><AiOutlineDelete size={16} /></EditGroup></StickyCell>
              </TRow>
            ))}
          </Table>
          <DialogFoot $h={49} $gap={6} $pad="8px 24px 0 0">
            <Button $primary $w={110} $h={33} $pb={3} $ls={-0.15}>Lưu thay đổi</Button>
            <Button $w={65} $h={33} $pb={2}>Đóng</Button>
          </DialogFoot>
        </EditDialog>

        <Frame $x={847} $y={97} $w={70} $h={49} />
        <Frame $x={598} $y={153} $w={128} $h={29} />
        <Frame $x={1137} $y={392} $w={113} $h={35} />
        <Step $x={754} $y={158}>2</Step>
        <Step $x={1141} $y={359}>4</Step>

        <AddDialog>
          <AddHead>Thêm Camera<AiOutlineClose size={16} /></AddHead>
          <Form>
            {FIELDS.map((f) => (
              <div key={f.l}>
                <Label $req={f.req}>{f.l}</Label>
                <Field $bad={f.bad} $h={f.h}>{f.v}{f.icon}{f.sel && <AiOutlineDown size={11} />}
                  {f.area && <Handle width="8" height="8" viewBox="0 0 8 8" stroke="#777" strokeWidth="1"><path d="M0 7.500 7.500 0M4 7.500 7.500 4" /></Handle>}
                </Field>
                {f.err && <Fault>vui lòng không để trống</Fault>}
                {f.hint && <Hint><AiOutlineBulb size={14} />{f.hint}</Hint>}
              </div>
            ))}
          </Form>
          <DialogFoot $h={38} $gap={7} $pad="6px 19px 0 0">
            <Button $primary $w={60} $h={25} $fs={12} $ls={0.5} $pb={1}>Thêm</Button>
            <Button $w={58} $h={25} $fs={12} $ls={0.5} $pb={1}>Đóng</Button>
          </DialogFoot>
        </AddDialog>
        <Frame $x={959} $y={828} $w={64} $h={31} />
        <Step $x={921} $y={827}>3</Step>

        <Frame $x={311} $y={732} $w={135} $h={25} $c={AMBER} />
        <Step $x={311} $y={695}>1</Step>
        <Tag $x={350} $y={649}>C1</Tag>
        <Frame $x={1857} $y={40} $w={28} $h={36} $c={AMBER} />
        <Tag $x={1849} $y={110}>C2</Tag>
        <Arrows width="1920" height="907" viewBox="0 0 1920 907" fill="none">
          <g stroke={BLUE} strokeWidth="4.500">
            <path d="M845 132.500 730 153M741 143 727 153.500 742 157.500" />
            <path d="M723 172 768 220M763.500 201 769.500 222.500 748.500 214" />
          </g>
          <path d="M365.200 684h5.600v32l9-4-11.800 26-11.800-26 9 4z" fill={AMBER} />
          <path d="M1872 112V90l-6 7-3.500-6 12.500-18 12.500 18-3.500 6-6-7v22z" fill={AMBER} />
        </Arrows>
      </Page>
    </>
  );
}
